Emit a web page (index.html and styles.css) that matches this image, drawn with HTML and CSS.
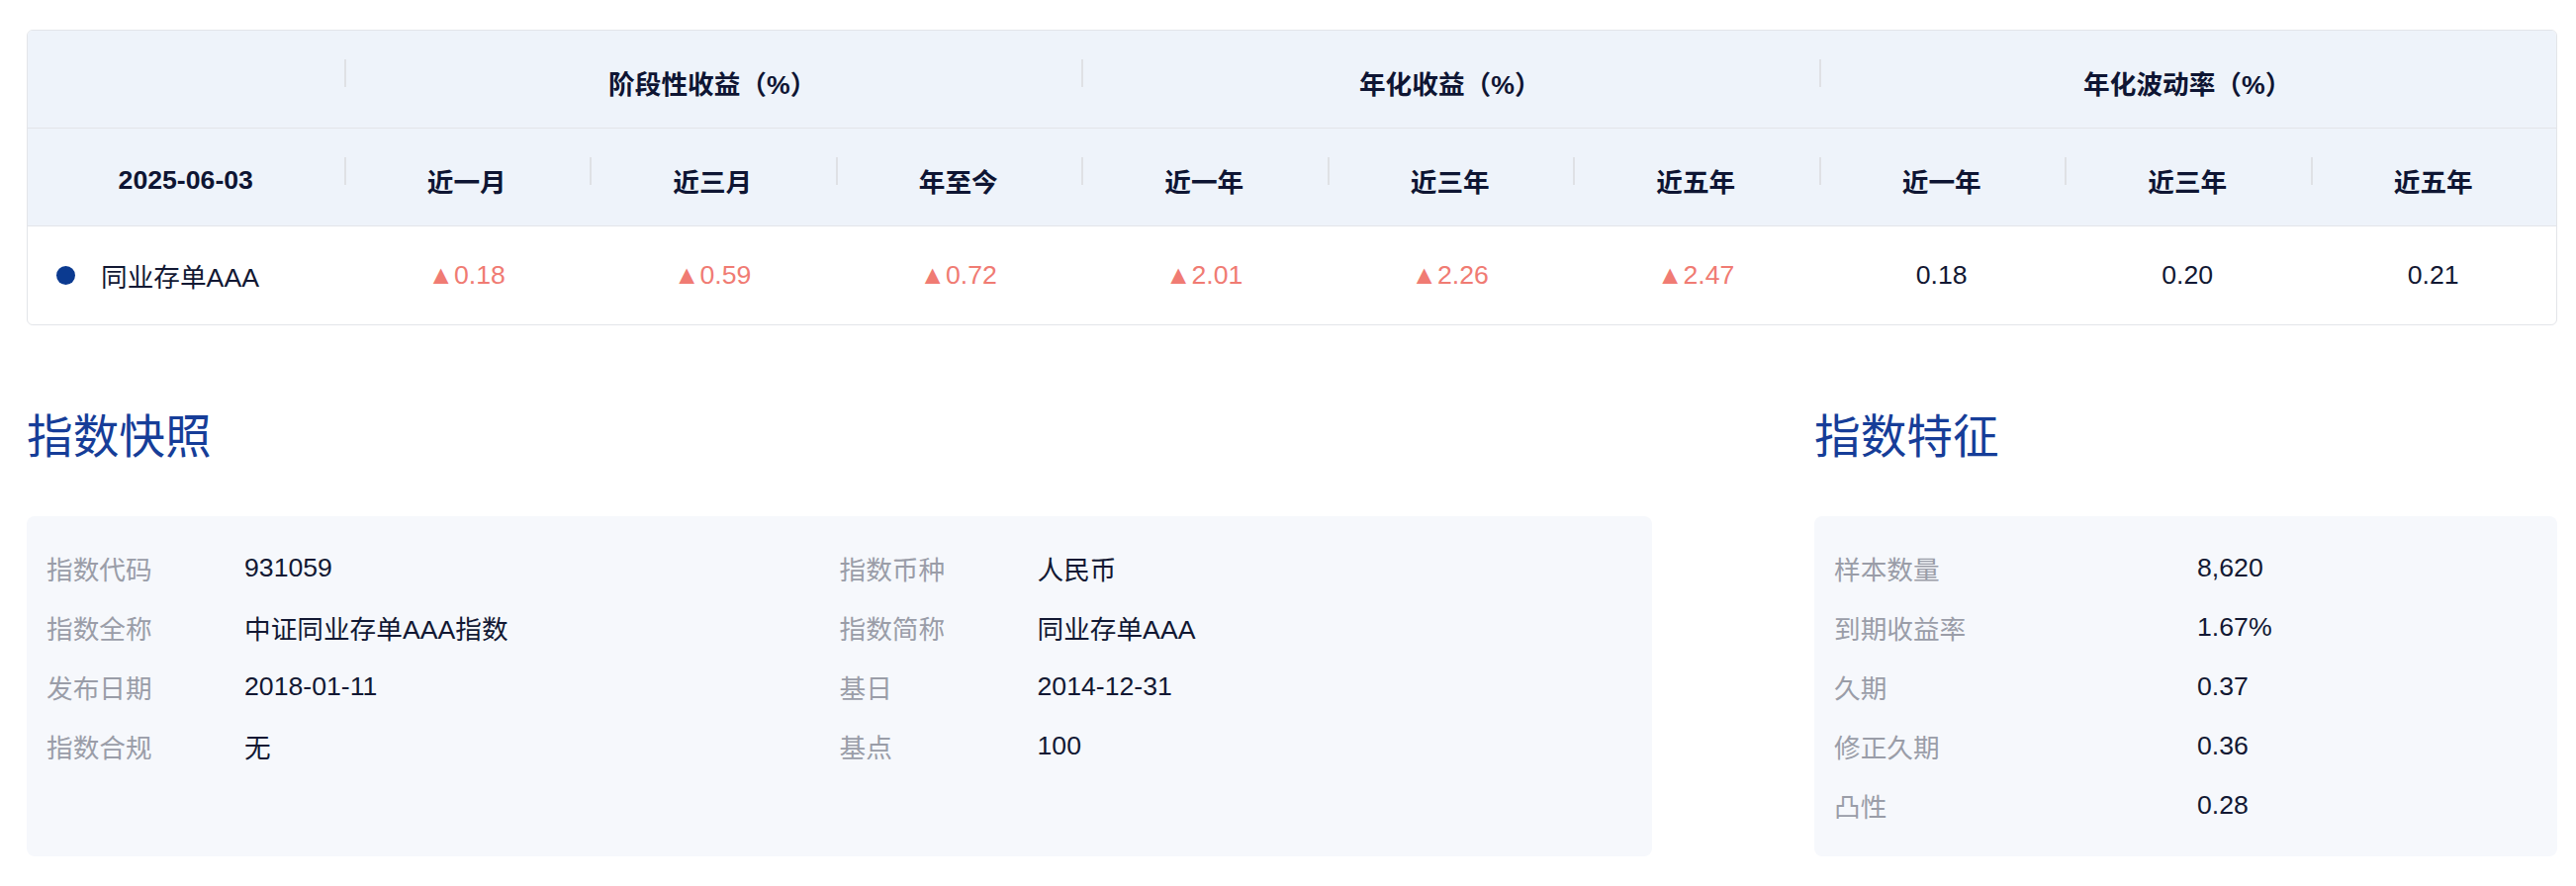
FILE: index.html
```html
<!DOCTYPE html>
<html lang="zh-CN">
<head>
<meta charset="utf-8">
<title>中证同业存单AAA指数</title>
<link rel="stylesheet" href="styles.css">
</head>
<body>
<div class="page">
  <div class="perf">
    <table class="perf-table">
      <colgroup>
        <col class="c-first">
        <col><col><col><col><col><col><col><col><col>
      </colgroup>
      <thead>
        <tr class="row-group">
          <th></th>
          <th colspan="3">阶段性收益（%）</th>
          <th colspan="3">年化收益（%）</th>
          <th colspan="3">年化波动率（%）</th>
        </tr>
        <tr class="row-sub">
          <th>2025-06-03</th>
          <th>近一月</th>
          <th>近三月</th>
          <th>年至今</th>
          <th>近一年</th>
          <th>近三年</th>
          <th>近五年</th>
          <th>近一年</th>
          <th>近三年</th>
          <th>近五年</th>
        </tr>
      </thead>
      <tbody>
        <tr>
          <td class="name"><div class="name-box"><span class="dot"></span><span>同业存单AAA</span></div></td>
          <td class="up">▲0.18</td>
          <td class="up">▲0.59</td>
          <td class="up">▲0.72</td>
          <td class="up">▲2.01</td>
          <td class="up">▲2.26</td>
          <td class="up">▲2.47</td>
          <td>0.18</td>
          <td>0.20</td>
          <td>0.21</td>
        </tr>
      </tbody>
    </table>
  </div>

  <div class="bottom">
    <section class="snap">
      <h2 class="title">指数快照</h2>
      <div class="panel snap-grid">
        <span class="lbl">指数代码</span><span class="val">931059</span>
        <span class="lbl">指数币种</span><span class="val">人民币</span>
        <span class="lbl">指数全称</span><span class="val">中证同业存单AAA指数</span>
        <span class="lbl">指数简称</span><span class="val">同业存单AAA</span>
        <span class="lbl">发布日期</span><span class="val">2018-01-11</span>
        <span class="lbl">基日</span><span class="val">2014-12-31</span>
        <span class="lbl">指数合规</span><span class="val">无</span>
        <span class="lbl">基点</span><span class="val">100</span>
      </div>
    </section>
    <section class="feat">
      <h2 class="title">指数特征</h2>
      <div class="panel feat-grid">
        <span class="lbl">样本数量</span><span class="val">8,620</span>
        <span class="lbl">到期收益率</span><span class="val">1.67%</span>
        <span class="lbl">久期</span><span class="val">0.37</span>
        <span class="lbl">修正久期</span><span class="val">0.36</span>
        <span class="lbl">凸性</span><span class="val">0.28</span>
      </div>
    </section>
  </div>
</div>
</body>
</html>
```

FILE: styles.css
```css
* { box-sizing: border-box; }

html, body {
  margin: 0;
  padding: 0;
  background: #ffffff;
}

body {
  font-family: "Liberation Sans", "Noto Sans CJK SC", sans-serif;
  font-size: 26.67px;
  color: #121833;
}

.page {
  width: 2604px;
  padding: 30px 19px 0 27px;
}

/* ---------- performance table ---------- */
.perf {
  width: 2558px;
  border: 1px solid #e3e5e9;
  border-radius: 6px;
  overflow: hidden;
}

.perf-table {
  width: 100%;
  table-layout: fixed;
  border-collapse: separate;
  border-spacing: 0;
}

.c-first { width: 12.5%; }

.perf-table th,
.perf-table td {
  padding: 0;
  height: 99px;
  text-align: center;
  vertical-align: middle;
  white-space: nowrap;
}

.perf-table th {
  position: relative;
  background: #eef3fa;
  font-weight: 700;
  color: #0e1533;
  border-bottom: 1px solid #e3e5e9;
  padding-top: 6px;
}

.perf-table th:not(:first-child)::before {
  content: "";
  position: absolute;
  left: 0;
  top: 29px;
  width: 2px;
  height: 28px;
  background: #dfe1e5;
}

.perf-table td {
  color: #121833;
}

.perf-table td.up {
  color: #f07b73;
}

.perf-table td.name {
  text-align: left;
  padding-left: 29px;
}

.name-box {
  display: flex;
  align-items: center;
}

.dot {
  flex: none;
  width: 19px;
  height: 19px;
  border-radius: 50%;
  background: #0b3a90;
  margin-right: 26px;
}

/* ---------- bottom sections ---------- */
.bottom {
  display: grid;
  grid-template-columns: 1643px 751px;
  column-gap: 164px;
  margin-top: 81px;
}

.title {
  margin: 0 0 47px 0;
  font-size: 46.67px;
  line-height: 65px;
  font-weight: 400;
  color: #163d98;
}

.snap, .feat {
  display: flex;
  flex-direction: column;
}

.panel {
  flex: 1;
  background: #f6f8fc;
  border-radius: 8px;
  padding: 22px 20px 22px 20px;
  display: grid;
  grid-auto-rows: 60px;
  align-content: start;
  align-items: center;
}

.snap-grid {
  grid-template-columns: 200px 1fr 200px 1fr;
}

.feat-grid {
  grid-template-columns: 367px 1fr;
}

.lbl {
  color: #9a9da8;
  white-space: nowrap;
}

.val {
  color: #121833;
  white-space: nowrap;
}
```
